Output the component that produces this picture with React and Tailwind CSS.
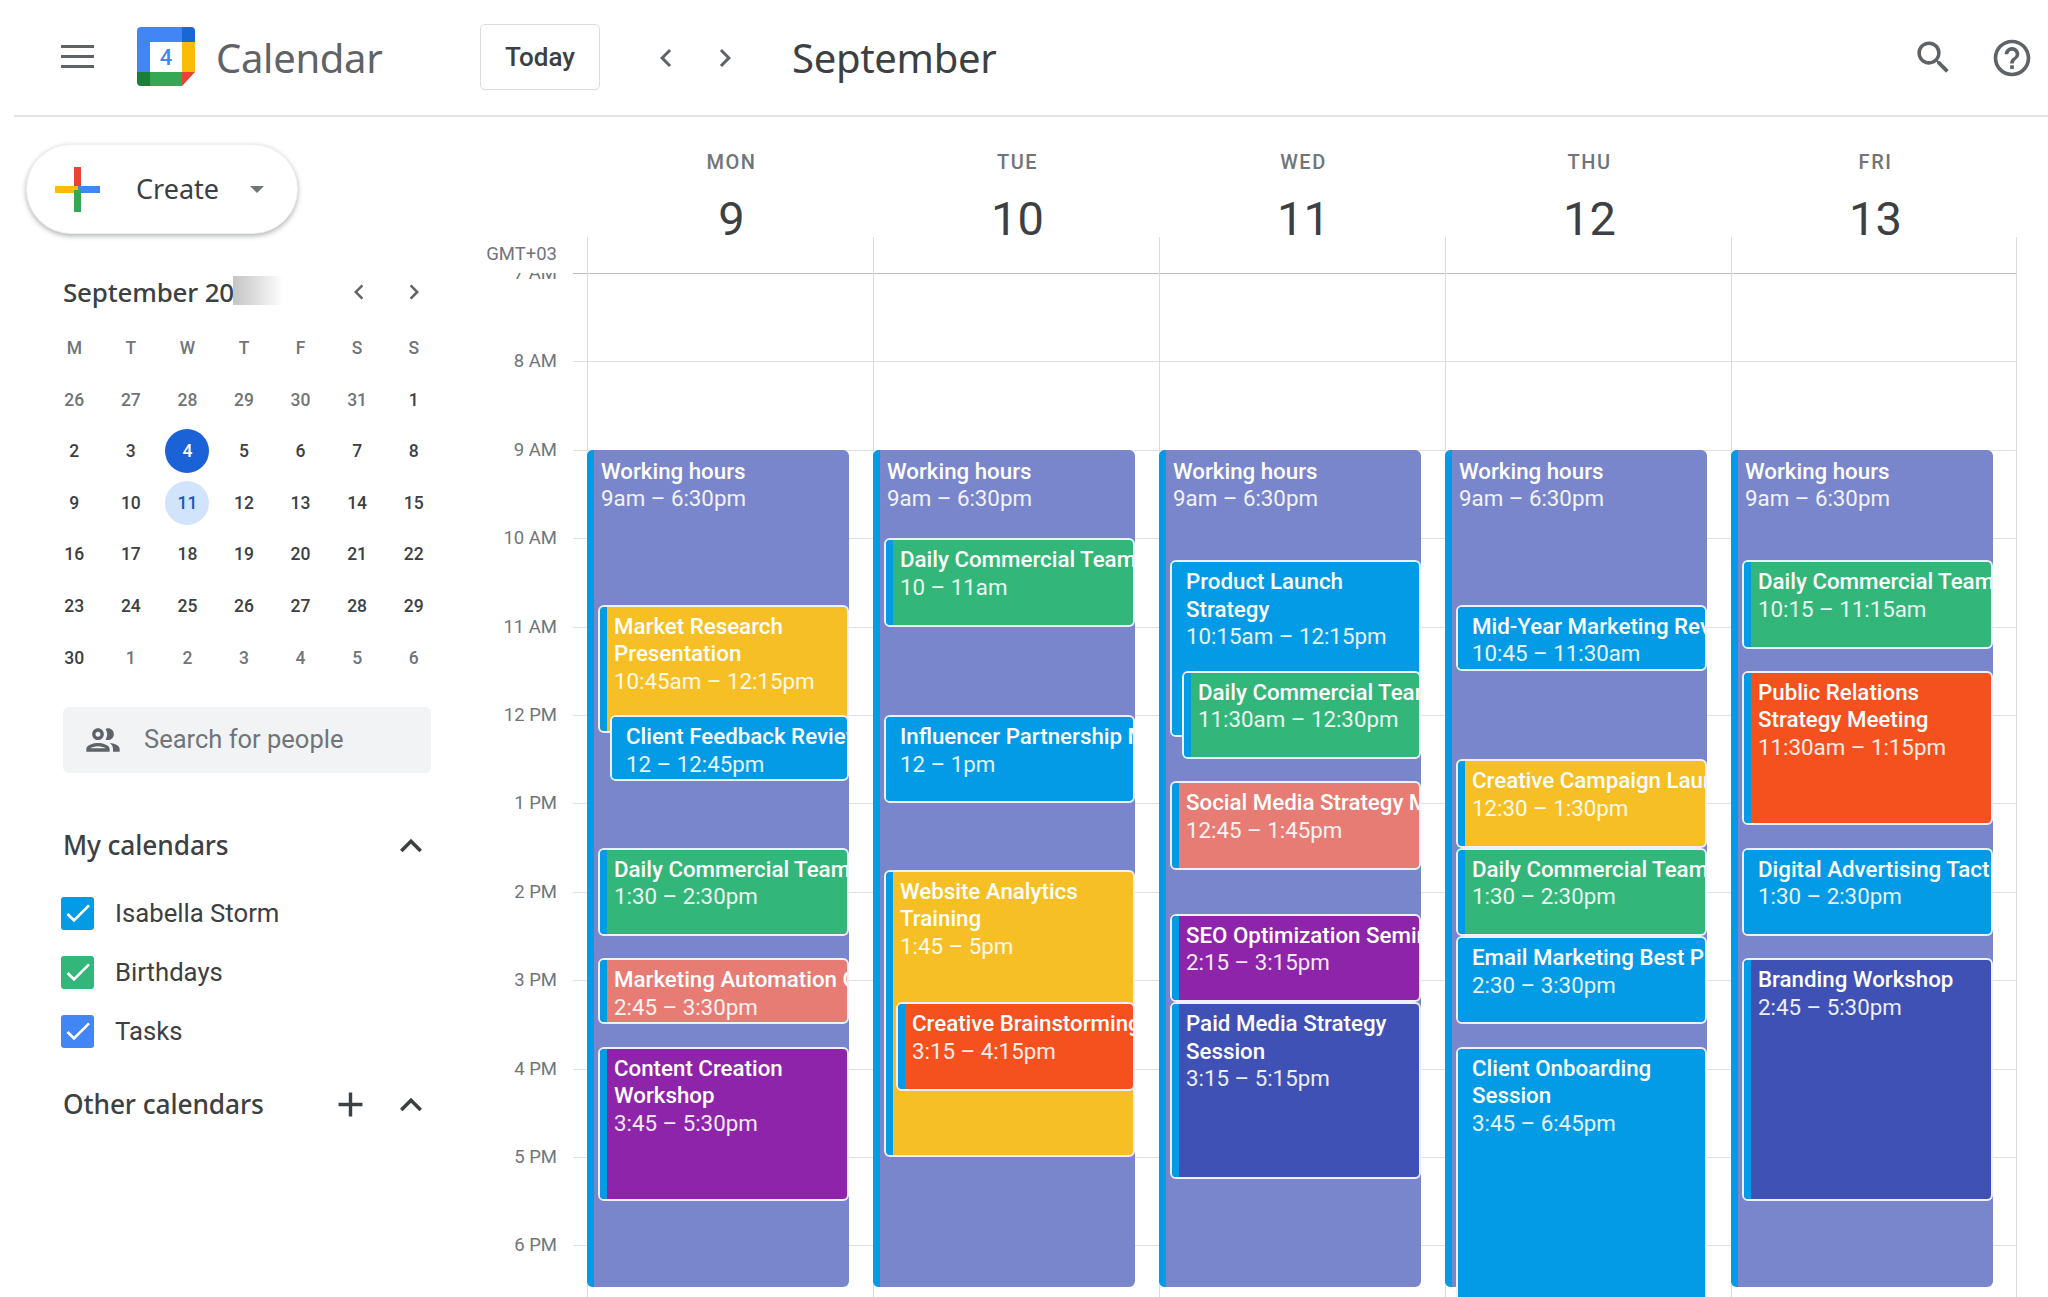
import { Fragment } from 'react';

const ROBOTO = 'font-["Roboto",sans-serif]';
const HOUR = 88.4;

const C = {
  blue: '#039be5',
  green: '#33b679',
  yellow: '#f6bf26',
  salmon: '#e67c73',
  purple: '#8e24aa',
  orange: '#f4511e',
  indigo: '#3f51b5',
};

const days = [
  {
    name: 'MON',
    num: '9',
    events: [
      { title: ['Market Research', 'Presentation'], time: '10:45am – 12:15pm', start: 10.75, end: 12.2, level: 1, color: C.yellow },
      { title: ['Client Feedback Review'], time: '12 – 12:45pm', start: 12, end: 12.75, level: 2, color: C.blue },
      { title: ['Daily Commercial Team Meeting'], time: '1:30 – 2:30pm', start: 13.5, end: 14.5, level: 1, color: C.green },
      { title: ['Marketing Automation Overview'], time: '2:45 – 3:30pm', start: 14.75, end: 15.5, level: 1, color: C.salmon },
      { title: ['Content Creation', 'Workshop'], time: '3:45 – 5:30pm', start: 15.75, end: 17.5, level: 1, color: C.purple },
    ],
  },
  {
    name: 'TUE',
    num: '10',
    events: [
      { title: ['Daily Commercial Team Meeting'], time: '10 – 11am', start: 10, end: 11, level: 1, color: C.green },
      { title: ['Influencer Partnership Meeting'], time: '12 – 1pm', start: 12, end: 13, level: 1, color: C.blue },
      { title: ['Website Analytics', 'Training'], time: '1:45 – 5pm', start: 13.75, end: 17, level: 1, color: C.yellow },
      { title: ['Creative Brainstorming'], time: '3:15 – 4:15pm', start: 15.25, end: 16.25, level: 2, color: C.orange },
    ],
  },
  {
    name: 'WED',
    num: '11',
    events: [
      { title: ['Product Launch', 'Strategy'], time: '10:15am – 12:15pm', start: 10.25, end: 12.25, level: 1, color: C.blue },
      { title: ['Daily Commercial Team Meeting'], time: '11:30am – 12:30pm', start: 11.5, end: 12.5, level: 2, color: C.green },
      { title: ['Social Media Strategy Meeting'], time: '12:45 – 1:45pm', start: 12.75, end: 13.75, level: 1, color: C.salmon },
      { title: ['SEO Optimization Seminar'], time: '2:15 – 3:15pm', start: 14.25, end: 15.25, level: 1, color: C.purple },
      { title: ['Paid Media Strategy', 'Session'], time: '3:15 – 5:15pm', start: 15.25, end: 17.25, level: 1, color: C.indigo },
    ],
  },
  {
    name: 'THU',
    num: '12',
    events: [
      { title: ['Mid-Year Marketing Review'], time: '10:45 – 11:30am', start: 10.75, end: 11.5, level: 1, color: C.blue },
      { title: ['Creative Campaign Launch'], time: '12:30 – 1:30pm', start: 12.5, end: 13.5, level: 1, color: C.yellow },
      { title: ['Daily Commercial Team Meeting'], time: '1:30 – 2:30pm', start: 13.5, end: 14.5, level: 1, color: C.green },
      { title: ['Email Marketing Best Practices'], time: '2:30 – 3:30pm', start: 14.5, end: 15.5, level: 1, color: C.blue },
      { title: ['Client Onboarding', 'Session'], time: '3:45 – 6:45pm', start: 15.75, end: 18.75, level: 1, color: C.blue },
    ],
  },
  {
    name: 'FRI',
    num: '13',
    events: [
      { title: ['Daily Commercial Team Meeting'], time: '10:15 – 11:15am', start: 10.25, end: 11.25, level: 1, color: C.green },
      { title: ['Public Relations', 'Strategy Meeting'], time: '11:30am – 1:15pm', start: 11.5, end: 13.25, level: 1, color: C.orange },
      { title: ['Digital Advertising Tactics'], time: '1:30 – 2:30pm', start: 13.5, end: 14.5, level: 1, color: C.blue },
      { title: ['Branding Workshop'], time: '2:45 – 5:30pm', start: 14.75, end: 17.5, level: 1, color: C.indigo },
    ],
  },
];

const hours = ['7 AM', '8 AM', '9 AM', '10 AM', '11 AM', '12 PM', '1 PM', '2 PM', '3 PM', '4 PM', '5 PM', '6 PM', ''];

const weeks = [
  [26, 27, 28, 29, 30, 31, 1],
  [2, 3, 4, 5, 6, 7, 8],
  [9, 10, 11, 12, 13, 14, 15],
  [16, 17, 18, 19, 20, 21, 22],
  [23, 24, 25, 26, 27, 28, 29],
  [30, 1, 2, 3, 4, 5, 6],
];

const Icon = ({ d, className }) => (
  <svg viewBox="0 0 24 24" fill="currentColor" className={className}>
    <path d={d} />
  </svg>
);

const PATHS = {
  left: 'M15.41 7.41L14 6l-6 6 6 6 1.41-1.41L10.83 12z',
  right: 'M8.59 16.59L10 18l6-6-6-6-1.41 1.41L13.17 12z',
  up: 'M12 8l-6 6 1.41 1.41L12 10.83l4.59 4.58L18 14z',
  add: 'M19 13h-6v6h-2v-6H5v-2h6V5h2v6h6v2z',
  check: 'M9 16.17L4.83 12l-1.42 1.41L9 19 21 7l-1.41-1.41z',
  search: 'M15.5 14h-.79l-.28-.27A6.471 6.471 0 0 0 16 9.5 6.5 6.5 0 1 0 9.5 16c1.61 0 3.09-.59 4.23-1.57l.27.28v.79l5 4.99L20.49 19l-4.99-5zm-6 0C7.01 14 5 11.99 5 9.5S7.01 5 9.5 5 14 7.01 14 9.5 11.99 14 9.5 14z',
  help: 'M11 18h2v-2h-2v2zm1-16C6.48 2 2 6.48 2 12s4.48 10 10 10 10-4.48 10-10S17.52 2 12 2zm0 18c-4.41 0-8-3.59-8-8s3.59-8 8-8 8 3.59 8 8-3.59 8-8 8zm0-14c-2.21 0-4 1.79-4 4h2c0-1.1.9-2 2-2s2 .9 2 2c0 2-3 1.75-3 5h2c0-2.25 3-2.5 3-5 0-2.21-1.79-4-4-4z',
  people: 'M9 13.75c-2.34 0-7 1.17-7 3.5V19h14v-1.75c0-2.33-4.66-3.5-7-3.5zM4.34 17c.84-.58 2.87-1.25 4.66-1.25s3.82.67 4.66 1.25H4.34zM9 12c1.93 0 3.5-1.57 3.5-3.5S10.93 5 9 5 5.5 6.57 5.5 8.5 7.07 12 9 12zm0-5c.83 0 1.5.67 1.5 1.5S9.83 10 9 10s-1.5-.67-1.5-1.5S8.17 7 9 7zm7.04 6.81c1.16.84 1.96 1.96 1.96 3.44V19h4v-1.75c0-2.02-3.5-3.17-5.96-3.44zM15 12c1.93 0 3.5-1.57 3.5-3.5S16.93 5 15 5c-.54 0-1.04.13-1.5.35.63.89 1 1.98 1 3.15s-.37 2.26-1 3.15c.46.22.96.35 1.5.35z',
};

const Logo = () => (
  <svg viewBox="0 0 58 59" className="w-[58px] h-[59px]">
    <path d="M4 0H45V15H13V45H0V4a4 4 0 0 1 4-4z" fill="#4285f4" />
    <path d="M45 0h9a4 4 0 0 1 4 4V15H45z" fill="#1967d2" />
    <path d="M45 15H58V45H45z" fill="#fbbc04" />
    <path d="M13 45H45V59H13z" fill="#34a853" />
    <path d="M0 45H13V59H4a4 4 0 0 1-4-4z" fill="#188038" />
    <path d="M45 45H58L45 59z" fill="#ea4335" />
    <text x="29" y="38" textAnchor="middle" fontSize="22" fontWeight="500" fontFamily="Roboto, sans-serif" fill="#4285f4">4</text>
  </svg>
);

const ColorPlus = () => (
  <svg viewBox="0 0 45 45" className="w-[45px] h-[45px]">
    <rect x="19" y="0" width="7" height="23" fill="#ea4335" />
    <rect x="0" y="19" width="23" height="7" fill="#fbbc04" />
    <rect x="23" y="19" width="22" height="7" fill="#4285f4" />
    <rect x="19" y="23" width="7" height="22" fill="#34a853" />
  </svg>
);

const Event = ({ title, time, start, end, left, width, color, stripe = C.blue, outlined = true, z }) => (
  <div
    className={`absolute overflow-hidden rounded-[6px] flex ${outlined ? 'border-2 border-[#eef0fb]' : ''}`}
    style={{ top: (start - 7) * HOUR, height: (end - start) * HOUR, left, width, background: color, zIndex: z }}
  >
    <div className="w-[7px] shrink-0" style={{ background: stripe }} />
    <div className={`${ROBOTO} pl-[7px] ${outlined ? 'pt-[6px]' : 'pt-[8px]'} text-[22.3px] leading-[27.5px] text-white whitespace-nowrap`}>
      {title.map((line) => (
        <div key={line} className="font-medium">{line}</div>
      ))}
      <div className="text-white/90">{time}</div>
    </div>
  </div>
);

const Sidebar = () => (
  <aside className="w-[470px] shrink-0 pt-[27px] pl-[26px]">
    <div className="flex items-center w-[272px] h-[90px] rounded-full bg-white border border-[#f0f0f0] shadow-[0_2px_5px_rgba(60,64,67,0.4)]">
      <div className="ml-[28px]"><ColorPlus /></div>
      <span className={`ml-[36px] w-[86px] text-[27px] text-[#3c4043] font-["Noto_Sans",sans-serif]`}>Create</span>
      <div className="ml-[28px] w-0 h-0 border-x-[7px] border-x-transparent border-t-[7px] border-t-[#70757a]" />
    </div>

    <div className="mt-[40px] ml-[37px] w-[370px] flex items-center h-[36px] relative">
      <span className={`text-[26px] text-[#3c4043] font-["Noto_Sans",sans-serif] font-medium tracking-[-0.2px]`}>September 20</span>
      <div className="absolute left-[170px] top-[2px] w-[50px] h-[29px] bg-linear-to-r from-[#c4c4c4] via-[#e0e0e0] to-white" />
      <Icon d={PATHS.left} className="absolute left-[281px] top-[3px] w-[30px] h-[30px] text-[#5f6368]" />
      <Icon d={PATHS.right} className="absolute left-[336px] top-[3px] w-[30px] h-[30px] text-[#5f6368]" />
    </div>

    <div className={`${ROBOTO} mt-[20px] ml-[20px] w-[396px] grid grid-cols-7 text-center text-[17.5px] font-medium`}>
      {['M', 'T', 'W', 'T', 'F', 'S', 'S'].map((d, i) => (
        <div key={i} className="h-[44px] pb-[8px] flex items-center justify-center text-[#70757a]">{d}</div>
      ))}
      {weeks.map((week, w) => (
        <Fragment key={w}>
          {week.map((n, i) => {
            const outside = (w === 0 && i < 6) || (w === 5 && i > 0);
            const today = w === 1 && i === 2;
            const selected = w === 2 && i === 2;
            return (
              <div key={i} className="h-[51.6px] flex items-center justify-center">
                <span
                  className={`w-[44px] h-[44px] rounded-full flex items-center justify-center ${
                    today ? 'bg-[#1a62d6] text-white' : selected ? 'bg-[#d2e3fc] text-[#185abc]' : outside ? 'text-[#70757a]' : 'text-[#3c4043]'
                  }`}
                >
                  {n}
                </span>
              </div>
            );
          })}
        </Fragment>
      ))}
    </div>

    <div className="mt-[23px] ml-[37px] w-[368px] h-[66px] rounded-[6px] bg-[#f1f3f4] flex items-center pl-[20px]">
      <Icon d={PATHS.people} className="w-[40px] h-[40px] text-[#5f6368]" />
      <span className={`${ROBOTO} ml-[21px] text-[25.5px] text-[#70757a]`}>Search for people</span>
    </div>

    <div className="mt-[53px] ml-[37px] w-[368px] h-[40px] flex items-center justify-between">
      <span className={`text-[26.3px] text-[#3c4043] font-["Noto_Sans",sans-serif] font-medium tracking-[-0.1px]`}>My calendars</span>
      <Icon d={PATHS.up} className="w-[44px] h-[44px] text-[#3c4043] -mr-[2px]" />
    </div>

    <div className="mt-[31px] ml-[35px] flex flex-col gap-[26px]">
      {[['Isabella Storm', '#039be5'], ['Birthdays', '#33b679'], ['Tasks', '#4285f4']].map(([label, color]) => (
        <div key={label} className="flex items-center h-[33px]">
          <div className="w-[33px] h-[33px] rounded-[3px] flex items-center justify-center" style={{ background: color }}>
            <Icon d={PATHS.check} className="w-[32px] h-[32px] text-white" />
          </div>
          <span className={`${ROBOTO} ml-[21px] text-[25.7px] text-[#3c4043]`}>{label}</span>
        </div>
      ))}
    </div>

    <div className="mt-[37px] ml-[37px] w-[368px] h-[40px] flex items-center">
      <span className={`text-[26.3px] text-[#3c4043] font-["Noto_Sans",sans-serif] font-medium tracking-[-0.1px]`}>Other calendars</span>
      <Icon d={PATHS.add} className="ml-auto w-[41px] h-[41px] text-[#3c4043]" />
      <Icon d={PATHS.up} className="ml-[18px] w-[44px] h-[44px] text-[#3c4043] -mr-[2px]" />
    </div>
  </aside>
);

const DayColumn = ({ day, last }) => (
  <div className={`relative border-l border-[#dadce0] ${last ? 'border-r' : ''}`}>
    {hours.map((h, i) => (
      <div key={i} className={`h-[88.4px] border-t ${i === 0 ? 'border-[#bdbdbd]' : 'border-[#e0e0e0]'}`} />
    ))}
    <Event title={['Working hours']} time="9am – 6:30pm" start={9} end={18.47} left={-1} width={262} color="#7986cb" outlined={false} z={1} />
    {day.events.map((e, i) => (
      <Event
        key={i}
        {...e}
        left={e.level === 1 ? 10 : 22}
        width={e.level === 1 ? 251 : 239}
        z={2 + i}
      />
    ))}
  </div>
);

export default function App() {
  return (
    <div className="h-[1297px] w-[2048px] overflow-hidden bg-white">
      <header className="ml-[14px] h-[117px] border-b-2 border-[#e4e4e4] flex items-center">
        <svg viewBox="0 0 33 23" className="ml-[47px] w-[33px] h-[23px] -mt-[3px] text-[#5f6368]" fill="currentColor">
          <rect y="0" width="33" height="3" />
          <rect y="10" width="33" height="3" />
          <rect y="20" width="33" height="3" />
        </svg>
        <div className="ml-[43px] -mt-[2px]"><Logo /></div>
        <span className={`ml-[21px] w-[165px] text-[40px] text-[#5f6368] font-["Noto_Sans",sans-serif] tracking-[-0.3px]`}>Calendar</span>
        <button className={`${ROBOTO} ml-[99px] -mt-[1px] w-[120px] h-[66px] rounded-[5px] border border-[#dadce0] text-[26px] font-medium text-[#3c4043]`}>Today</button>
        <Icon d={PATHS.left} className="ml-[48px] w-[36px] h-[36px] text-[#5f6368]" />
        <Icon d={PATHS.right} className="ml-[23px] w-[36px] h-[36px] text-[#5f6368]" />
        <span className={`ml-[49px] text-[40px] text-[#3c4043] font-["Noto_Sans",sans-serif] tracking-[-0.3px]`}>September</span>
        <Icon d={PATHS.search} className="ml-auto mr-[35px] w-[43px] h-[43px] text-[#5f6368]" />
        <Icon d={PATHS.help} className="mr-[14px] w-[44px] h-[44px] text-[#5f6368]" />
      </header>

      <div className="flex">
        <Sidebar />
        <div className="flex-1 min-w-0">
          <div className="flex h-[156px]">
            <div className={`${ROBOTO} w-[117px] shrink-0 pr-[30px] pt-[126px] text-right text-[18.5px] leading-[22px] text-[#70757a]`}>GMT+03</div>
            <div className="grid grid-cols-[repeat(5,286px)]">
              {days.map((d, i) => (
                <div key={d.name} className="flex flex-col items-center relative pl-[3px]">
                  <div className={`${ROBOTO} mt-[33px] text-[20px] leading-[24px] font-medium tracking-[1.5px] text-[#70757a]`}>{d.name}</div>
                  <div className={`${ROBOTO} mt-[17px] text-[47px] leading-[56px] text-[#3c4043]`}>{d.num}</div>
                  <div className="absolute left-0 bottom-0 h-[36px] border-l border-[#dadce0]" />
                  {i === 4 && <div className="absolute right-0 bottom-0 h-[36px] border-r border-[#dadce0]" />}
                </div>
              ))}
            </div>
          </div>
          <div className="flex">
            <div className="w-[117px] shrink-0">
              {hours.map((h, i) => (
                <div key={i} className="h-[88.4px] flex">
                  <div className={`${ROBOTO} w-[87px] text-right text-[18.5px] leading-[22px] text-[#70757a] ${i === 0 ? 'h-[11px] overflow-hidden' : 'h-[22px] -mt-[11px]'}`}>
                    <div className={i === 0 ? '-mt-[11px]' : ''}>{h}</div>
                  </div>
                  <div className={`ml-[16px] flex-1 border-t ${i === 0 ? 'border-[#bdbdbd]' : 'border-[#e0e0e0]'}`} />
                </div>
              ))}
            </div>
            <div className="grid grid-cols-[repeat(5,286px)]">
              {days.map((d, i) => (
                <DayColumn key={d.name} day={d} last={i === 4} />
              ))}
            </div>
          </div>
        </div>
      </div>
    </div>
  );
}
